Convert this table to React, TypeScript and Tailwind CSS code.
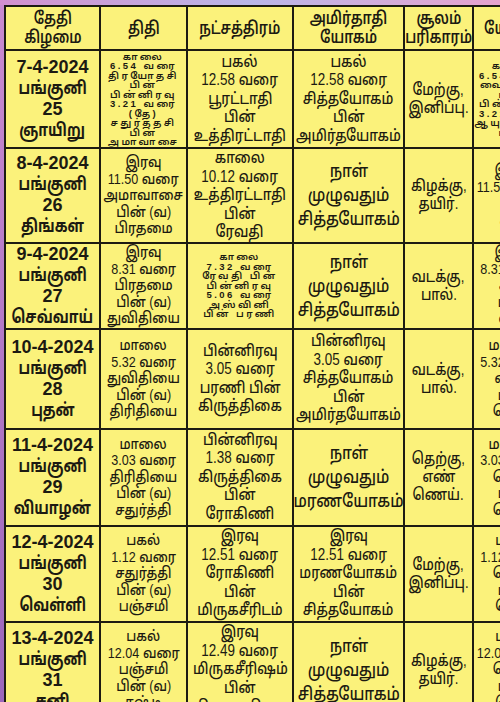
import React from "react";

type Size = "xs" | "sm" | "md" | "lg";
type Cell = { lines: string[]; size?: Size };

interface Row {
  height: string;
  date: string[];
  thithi: Cell;
  star: Cell;
  amirtha: Cell;
  soolam: string[];
  yogam: Cell;
}

const HEADERS = [
  ["தேதி", "கிழமை"],
  ["திதி"],
  ["நட்சத்திரம்"],
  ["அமிர்தாதி", "யோகம்"],
  ["சூலம்", "பரிகாரம்"],
  ["யோகம்"],
];

const ROWS: Row[] = [
  {
    height: "h-[98px]",
    date: ["7-4-2024", "பங்குனி", "25", "ஞாயிறு"],
    thithi: {
      size: "xs",
      lines: ["காலை", "6.54 வரை", "திரயோதசி", "பின்", "பின்னிரவு", "3.21 வரை", "(தே)", "சதுர்த்தசி", "பின்", "அமாவாசை"],
    },
    star: { lines: ["பகல்", "12.58 வரை", "பூரட்டாதி", "பின்", "உத்திரட்டாதி"] },
    amirtha: { lines: ["பகல்", "12.58 வரை", "சித்தயோகம்", "பின்", "அமிர்தயோகம்"] },
    soolam: ["மேற்கு,", "இனிப்பு."],
    yogam: { size: "xs", lines: ["காலை", "6.54 வரை", "வைதிருதி", "பின்", "பின்னிரவு", "3.21 வரை", "ஆயுஷ்மான்", "பின்"] },
  },
  {
    height: "h-[90px]",
    date: ["8-4-2024", "பங்குனி", "26", "திங்கள்"],
    thithi: { size: "sm", lines: ["இரவு", "11.50 வரை", "அமாவாசை", "பின் (வ)", "பிரதமை"] },
    star: { lines: ["காலை", "10.12 வரை", "உத்திரட்டாதி", "பின்", "ரேவதி"] },
    amirtha: { size: "lg", lines: ["நாள்", "முழுவதும்", "சித்தயோகம்"] },
    soolam: ["கிழக்கு,", "தயிர்."],
    yogam: { size: "sm", lines: ["இரவு", "11.50 வரை", "பூம்", "கிழ"] },
  },
  {
    height: "h-[86px]",
    date: ["9-4-2024", "பங்குனி", "27", "செவ்வாய்"],
    thithi: { size: "sm", lines: ["இரவு", "8.31 வரை", "பிரதமை", "பின் (வ)", "துவிதியை"] },
    star: { size: "xs", lines: ["காலை", "7.32 வரை", "ரேவதி பின்", "பின்னிரவு", "5.06 வரை", "அஸ்வினி", "பின் பரணி"] },
    amirtha: { size: "lg", lines: ["நாள்", "முழுவதும்", "சித்தயோகம்"] },
    soolam: ["வடக்கு,", "பால்."],
    yogam: { size: "sm", lines: ["இரவு", "8.31 வரை", "கிரு", "பின்", "வள"] },
  },
  {
    height: "h-[100px]",
    date: ["10-4-2024", "பங்குனி", "28", "புதன்"],
    thithi: { size: "sm", lines: ["மாலை", "5.32 வரை", "துவிதியை", "பின் (வ)", "திரிதியை"] },
    star: { lines: ["பின்னிரவு", "3.05 வரை", "பரணி பின்", "கிருத்திகை"] },
    amirtha: { lines: ["பின்னிரவு", "3.05 வரை", "சித்தயோகம்", "பின்", "அமிர்தயோகம்"] },
    soolam: ["வடக்கு,", "பால்."],
    yogam: { size: "sm", lines: ["மாலை", "5.32 வரை", "வளர்", "பின்", "தெளி"] },
  },
  {
    height: "h-[97px]",
    date: ["11-4-2024", "பங்குனி", "29", "வியாழன்"],
    thithi: { size: "sm", lines: ["மாலை", "3.03 வரை", "திரிதியை", "பின் (வ)", "சதுர்த்தி"] },
    star: { lines: ["பின்னிரவு", "1.38 வரை", "கிருத்திகை", "பின்", "ரோகிணி"] },
    amirtha: { size: "lg", lines: ["நாள்", "முழுவதும்", "மரணயோகம்"] },
    soolam: ["தெற்கு,", "எண்", "ணெய்."],
    yogam: { size: "sm", lines: ["மாலை", "3.03 வரை", "தெளி", "பின்", "தெளி"] },
  },
  {
    height: "h-[96px]",
    date: ["12-4-2024", "பங்குனி", "30", "வெள்ளி"],
    thithi: { size: "sm", lines: ["பகல்", "1.12 வரை", "சதுர்த்தி", "பின் (வ)", "பஞ்சமி"] },
    star: { lines: ["இரவு", "12.51 வரை", "ரோகிணி", "பின்", "மிருகசீரிடம்"] },
    amirtha: { lines: ["இரவு", "12.51 வரை", "மரணயோகம்", "பின்", "சித்தயோகம்"] },
    soolam: ["மேற்கு,", "இனிப்பு."],
    yogam: { size: "sm", lines: ["பகல்", "1.12 வரை", "தெளி", "பின்", "செள"] },
  },
  {
    height: "h-[96px]",
    date: ["13-4-2024", "பங்குனி", "31", "சனி"],
    thithi: { size: "sm", lines: ["பகல்", "12.04 வரை", "பஞ்சமி", "பின் (வ)", "சஷ்டி"] },
    star: { lines: ["இரவு", "12.49 வரை", "மிருகசீரிஷம்", "பின்", "திருவாதிரை"] },
    amirtha: { size: "lg", lines: ["நாள்", "முழுவதும்", "சித்தயோகம்"] },
    soolam: ["கிழக்கு,", "தயிர்."],
    yogam: { size: "sm", lines: ["பகல்", "12.04 வரை", "தெளி", "பின்", "செள"] },
  },
];

const SIZE_CLASS: Record<Size, string> = {
  xs: "text-[9.5px] font-semibold leading-[9.5px] tracking-[0.26em]",
  sm: "text-[15px] font-medium leading-[16.5px]",
  md: "text-[16px] font-medium leading-[18.5px]",
  lg: "text-[18px] font-medium leading-[24px]",
};

const SQUEEZE: Record<Size, string> = {
  xs: "scale-x-100",
  sm: "scale-x-[0.84]",
  md: "scale-x-[0.84]",
  lg: "scale-x-[0.84]",
};

const TAMIL = /[\u0B80-\u0BFF]/;

// Tamil glyphs in the installed font run wider than the print, so squeeze them
function Line({ text, squeeze }: { text: string; squeeze: string }) {
  return (
    <div className="flex justify-center whitespace-nowrap">
      <span className={TAMIL.test(text) ? `inline-block ${squeeze}` : "inline-block"}>{text}</span>
    </div>
  );
}

function Lines({ lines, className, squeeze }: { lines: string[]; className: string; squeeze: string }) {
  return (
    <div className={`flex flex-col items-center ${className}`}>
      {lines.map((line, i) => (
        <Line key={i} text={line} squeeze={squeeze} />
      ))}
    </div>
  );
}

function CellLines({ cell }: { cell: Cell }) {
  const size = cell.size ?? "md";
  return <Lines lines={cell.lines} className={SIZE_CLASS[size]} squeeze={SQUEEZE[size]} />;
}

const td = "border-2 border-[#1d1b12] p-0 text-center align-middle overflow-hidden";

export default function App() {
  return (
    <div
      className="flex h-[702px] w-[500px] flex-col overflow-hidden bg-[#a66fc0] text-[#1c1a12]"
      style={{ fontFamily: '"Liberation Sans", "Noto Sans", "Noto Sans Tamil", sans-serif' }}
    >
      <div className="h-[5px] shrink-0 bg-gradient-to-r from-[#d28fcf] via-[#b9b6ea] to-[#e6a2cf]" />
      <div className="flex flex-1 overflow-hidden">
        <div className="w-[4px] shrink-0 bg-gradient-to-b from-[#c98ad0] to-[#9c67bb]" />
        <table className="w-[547px] shrink-0 table-fixed border-collapse bg-[#fbf27b]">
          <colgroup>
            <col className="w-[95px]" />
            <col className="w-[87px]" />
            <col className="w-[106px]" />
            <col className="w-[111px]" />
            <col className="w-[69px]" />
            <col className="w-[79px]" />
          </colgroup>
          <thead>
            <tr className="h-[44px]">
              {HEADERS.map((h, i) => (
                <th key={i} className={td}>
                  <Lines lines={h} className="text-[17px] font-semibold leading-[19px]" squeeze="scale-x-[0.8]" />
                </th>
              ))}
            </tr>
          </thead>
          <tbody>
            {ROWS.map((row, i) => (
              <tr key={i} className={row.height}>
                <td className={td}>
                  <Lines lines={row.date} className="text-[18px] font-bold leading-[21px]" squeeze="scale-x-[0.78]" />
                </td>
                <td className={td}>
                  <CellLines cell={row.thithi} />
                </td>
                <td className={td}>
                  <CellLines cell={row.star} />
                </td>
                <td className={td}>
                  <CellLines cell={row.amirtha} />
                </td>
                <td className={td}>
                  <Lines lines={row.soolam} className="text-[16px] font-medium leading-[18px]" squeeze="scale-x-[0.82]" />
                </td>
                <td className={td}>
                  <CellLines cell={row.yogam} />
                </td>
              </tr>
            ))}
          </tbody>
        </table>
      </div>
    </div>
  );
}
